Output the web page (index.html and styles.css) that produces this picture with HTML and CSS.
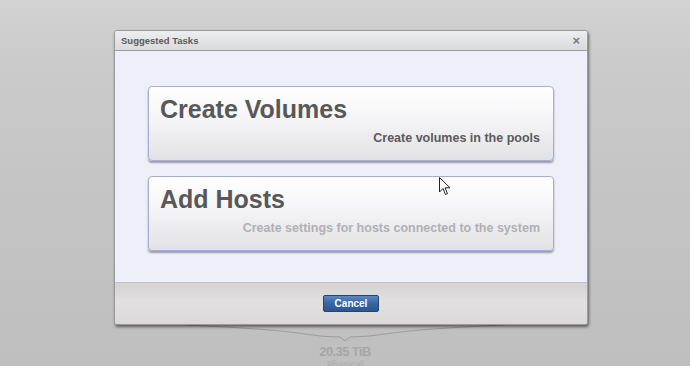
FILE: index.html
```html
<!DOCTYPE html>
<html lang="en">
<head>
    <meta charset="UTF-8">
    <title>Suggested Tasks</title>
    <link rel="stylesheet" href="styles.css">
</head>
<body>
    <div class="backdrop">
        <svg class="bubble" width="320" height="18" viewBox="0 0 320 18">
            <path d="M0 1 Q90 5 120 10 Q138 13 155 13 L160 17 L165 13 Q182 13 200 10 Q230 5 320 1" fill="none" stroke="#9c9c9c" stroke-width="1"/>
        </svg>
        <div class="capacity">20.35 TiB</div>
        <div class="capacity-label">Physical</div>
    </div>

    <div class="dialog">
        <div class="dialog-head">
            <span>Suggested Tasks</span>
            <span class="close">&#215;</span>
        </div>
        <div class="dialog-body">
            <div class="task">
                <div class="task-title">Create Volumes</div>
                <div class="task-desc">Create volumes in the pools</div>
            </div>
            <div class="task">
                <div class="task-title">Add Hosts</div>
                <div class="task-desc muted">Create settings for hosts connected to the system</div>
            </div>
        </div>
        <div class="dialog-foot">
            <div class="cancel-btn">Cancel</div>
        </div>
    </div>

    <svg class="cursor" width="12" height="19" viewBox="0 0 12 19">
        <path d="M0.5 0.5 L0.5 15 L4 11.5 L6.5 17.5 L8.5 16.6 L6 10.8 L11 10.8 Z" fill="#fff" stroke="#222" stroke-width="1" stroke-linejoin="round"/>
    </svg>
</body>
</html>
```

FILE: styles.css
```css
* {
    margin: 0;
    padding: 0;
    box-sizing: border-box;
}

body {
    font-family: "Liberation Sans", Arial, sans-serif;
    background: linear-gradient(#d2d2d2 0, #cbcbcb 60px, #c4c4c4 200px, #bfbfbf 366px);
    width: 690px;
    height: 366px;
    overflow: hidden;
    position: relative;
}

.backdrop {
    height: 366px;
    display: flex;
    flex-direction: column;
    align-items: center;
    padding-top: 324px;
}

.backdrop > * {
    flex-shrink: 0;
}

.capacity {
    margin-top: 2px;
    font-size: 13px;
    font-weight: bold;
    letter-spacing: -0.6px;
    color: #a6a6a6;
    line-height: 15px;
}

.capacity-label {
    font-size: 9px;
    font-weight: bold;
    color: #b0b0b0;
    line-height: 10px;
}

.dialog {
    position: absolute;
    left: 114px;
    top: 30px;
    width: 474px;
    height: 295px;
    border: 1px solid #9a9a9a;
    border-radius: 3px;
    background: #eeeff8;
    box-shadow: 1px 2px 3px rgba(0, 0, 0, 0.5);
    display: flex;
    flex-direction: column;
    overflow: hidden;
}

.dialog-head {
    height: 20px;
    display: flex;
    justify-content: space-between;
    align-items: center;
    padding: 0 7px 0 6px;
    background: linear-gradient(#eceef0, #d8dadc);
    border-bottom: 1px solid #9d9d9d;
    font-size: 9.5px;
    font-weight: bold;
    color: #5a5a5a;
}

.close {
    font-size: 13px;
    color: #7a7a7a;
}

.dialog-body {
    flex: 1;
    padding: 35px 33px 0;
    display: flex;
    flex-direction: column;
    gap: 15px;
}

.task {
    height: 75px;
    border: 1px solid #a9acd6;
    border-radius: 4px;
    background: linear-gradient(#ffffff 0, #f6f6f8 40%, #e2e2e6 100%);
    box-shadow: 0 2px 2px rgba(0, 0, 0, 0.35);
    padding: 7px 13px 0 11px;
}

.task-title {
    font-size: 25px;
    font-weight: bold;
    line-height: 30px;
    color: #585858;
}

.task-desc {
    margin-top: 7px;
    text-align: right;
    font-size: 12.5px;
    font-weight: bold;
    line-height: 15px;
    color: #5a5a5a;
}

.task-desc.muted {
    color: #b0b0b4;
}

.dialog-foot {
    height: 42px;
    border-top: 1px solid #c4c4c4;
    background: linear-gradient(#d4d2d2 0, #e2e0e0 45%, #dad8d8 100%);
    display: flex;
    justify-content: center;
    padding-top: 12px;
}

.cancel-btn {
    width: 56px;
    height: 17px;
    border: 1px solid #24446f;
    border-radius: 2px;
    background: linear-gradient(#5c88c2, #3766a3 50%, #2b5690);
    color: #fff;
    font-size: 10px;
    font-weight: bold;
    text-align: center;
    line-height: 15px;
    cursor: pointer;
}

.cursor {
    position: absolute;
    left: 439px;
    top: 177px;
}
```
